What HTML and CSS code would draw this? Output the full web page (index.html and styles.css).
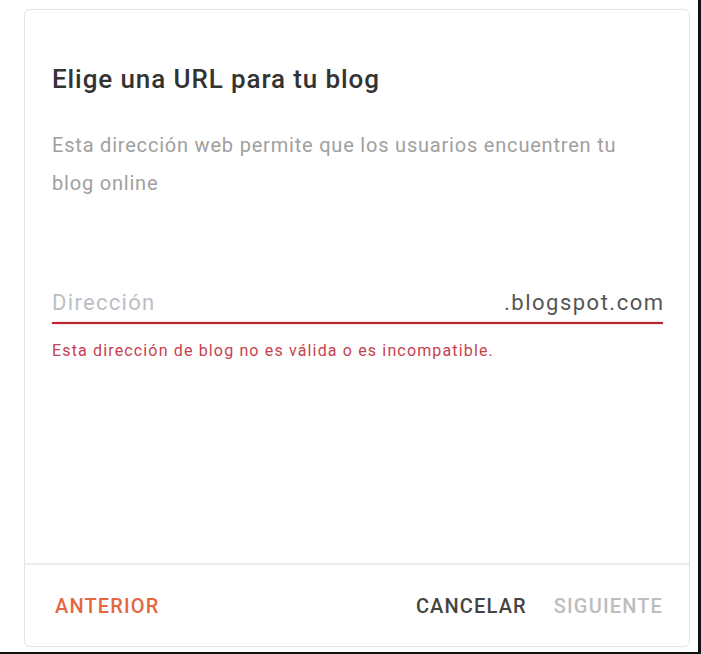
FILE: index.html
```html
<!DOCTYPE html>
<html lang="es">
<head>
<meta charset="utf-8">
<title>Elige una URL para tu blog</title>
<link rel="stylesheet" href="styles.css">
</head>
<body>
<div class="frame">
  <div class="card">
    <div class="card-body">
      <h1 class="title">Elige una URL para tu blog</h1>
      <p class="desc">Esta dirección web permite que los usuarios encuentren tu blog online</p>
      <div class="field">
        <div class="field-row">
          <span class="placeholder">Dirección</span>
          <span class="suffix">.blogspot.com</span>
        </div>
        <div class="field-line"></div>
        <p class="error">Esta dirección de blog no es válida o es incompatible.</p>
      </div>
    </div>
    <div class="card-footer">
      <button class="btn btn-prev">ANTERIOR</button>
      <div class="footer-right">
        <button class="btn btn-cancel">CANCELAR</button>
        <button class="btn btn-next">SIGUIENTE</button>
      </div>
    </div>
  </div>
</div>
</body>
</html>
```

FILE: styles.css
```css
html, body {
  margin: 0;
  padding: 0;
  background: #ffffff;
}

body {
  font-family: Roboto, "Noto Sans", "Liberation Sans", sans-serif;
}

.frame {
  width: 701px;
  height: 654px;
  box-sizing: border-box;
  border-right: 3px solid #111111;
  border-bottom: 2px solid #111111;
  padding: 9px 8px 5px 24px;
  display: flex;
}

.card {
  flex: 1;
  display: flex;
  flex-direction: column;
  border: 1px solid #e4e4e4;
  border-radius: 6px;
  box-shadow: 0 0 2px rgba(0, 0, 0, 0.04);
}

.card-body {
  flex: 1;
  padding: 53px 26px 0 27px;
  border-bottom: 2px solid #ececec;
}

.title {
  margin: 0;
  font-size: 26px;
  line-height: 32px;
  font-weight: 500;
  letter-spacing: 0.9px;
  color: #333333;
}

.desc {
  margin: 31px 0 0;
  max-width: 580px;
  font-size: 20px;
  line-height: 38px;
  letter-spacing: 0.8px;
  color: #a0a0a0;
}

.field {
  margin-top: 87px;
}

.field-row {
  display: flex;
  justify-content: space-between;
  align-items: baseline;
}

.placeholder {
  font-size: 22px;
  line-height: 28px;
  letter-spacing: 1.3px;
  color: #bcbec6;
}

.suffix {
  font-size: 22px;
  line-height: 28px;
  letter-spacing: 1.5px;
  margin-right: -1.5px;
  color: #555555;
}

.field-line {
  margin-top: 5px;
  height: 2px;
  background: #b8262f;
  box-shadow: 0 0 1.5px rgba(220, 70, 80, 0.6);
}

.error {
  margin: 17px 0 0;
  font-size: 16px;
  line-height: 20px;
  letter-spacing: 1.15px;
  color: #c6414f;
}

.card-footer {
  height: 81px;
  display: flex;
  align-items: center;
  justify-content: space-between;
  padding: 0 26px 0 30px;
}

.footer-right {
  display: flex;
  gap: 27px;
}

.btn {
  border: 0;
  background: none;
  padding: 0;
  font-family: Roboto, "Noto Sans", "Liberation Sans", sans-serif;
  font-size: 20px;
  font-weight: 500;
  letter-spacing: 1.15px;
  line-height: 24px;
  cursor: pointer;
}

.btn-prev {
  color: #e4683f;
}

.btn-cancel {
  color: #444444;
}

.btn-next {
  color: #bdbdbd;
}
```
